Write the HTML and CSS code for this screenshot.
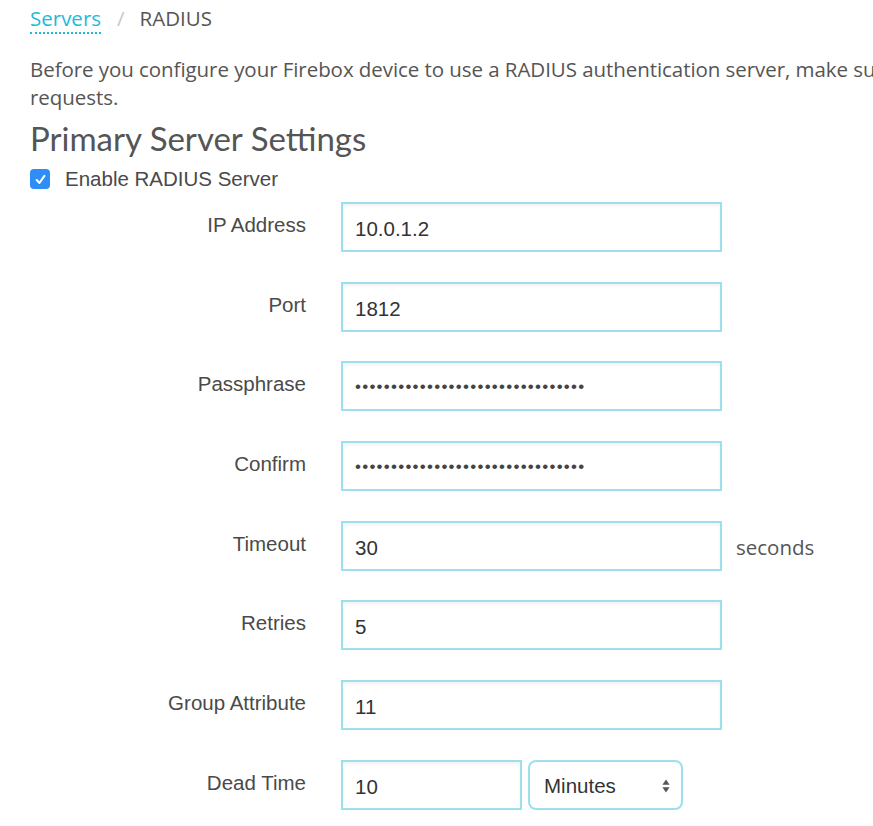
FILE: index.html
```html
<!DOCTYPE html>
<html>
<head>
<meta charset="utf-8">
<link rel="stylesheet" href="styles.css">
</head>
<body>
<div class="page">
  <nav class="crumbs"><a class="crumb-link">Servers</a><span class="sep">/</span><span class="crumb-cur">RADIUS</span></nav>
  <p class="intro">Before you configure your Firebox device to use a RADIUS authentication server, make sure that the server is configured to accept authentication requests.</p>
  <h2 class="title">Primary Server Settings</h2>
  <label class="check"><span class="box"><svg width="13" height="13" viewBox="0 0 12 12"><path d="M2.5 6.5 L5 9.2 L9.6 2.6" fill="none" stroke="#fff" stroke-width="1.9" stroke-linecap="round" stroke-linejoin="round"/></svg></span><span class="check-label">Enable RADIUS Server</span></label>
  <div class="form">
    <div class="row"><div class="lbl">IP Address</div><div class="field"><div class="input">10.0.1.2</div></div></div>
    <div class="row"><div class="lbl">Port</div><div class="field"><div class="input">1812</div></div></div>
    <div class="row"><div class="lbl">Passphrase</div><div class="field"><div class="input dots">••••••••••••••••••••••••••••••••</div></div></div>
    <div class="row"><div class="lbl">Confirm</div><div class="field"><div class="input dots">••••••••••••••••••••••••••••••••</div></div></div>
    <div class="row"><div class="lbl">Timeout</div><div class="field"><div class="input">30</div><span class="unit">seconds</span></div></div>
    <div class="row"><div class="lbl">Retries</div><div class="field"><div class="input">5</div></div></div>
    <div class="row"><div class="lbl">Group Attribute</div><div class="field"><div class="input">11</div></div></div>
    <div class="row"><div class="lbl">Dead Time</div><div class="field"><div class="input short">10</div><div class="select">Minutes<svg class="arrows" width="10" height="18" viewBox="0 0 10 18"><path d="M5 2.5 L8.6 7.8 L1.4 7.8 Z" fill="#555"/><path d="M5 15.5 L8.6 10.2 L1.4 10.2 Z" fill="#555"/></svg></div></div></div>
  </div>
</div>
</body>
</html>
```
FILE: styles.css
```css
html, body { margin: 0; padding: 0; background: #fff; }
body { overflow: hidden; width: 873px; height: 826px; }
.page { padding: 4px 0 0 30px; width: 1500px; }
.crumbs { font-family: "Open Sans", sans-serif; font-size: 20.5px; line-height: 28px; height: 32px; color: #555; display: flex; align-items: flex-start; }
.crumb-link { color: #1bbcd9; border-bottom: 2px dotted #1bbcd9; line-height: 28px; }
.sep { color: #c8c8c8; margin: 0 15px 0 16px; }
.crumb-cur { color: #555; }
.intro { font-family: "Open Sans", sans-serif; font-size: 20.5px; line-height: 28px; color: #555; margin: 19px 0 0 0; width: 1440px; letter-spacing: -0.06px; }
.title { font-family: "Lato", sans-serif; font-weight: 400; font-size: 33px; line-height: 40px; color: #555; margin: 7px 0 0 0; }
.check { display: flex; align-items: center; margin-top: 9px; height: 24px; }
.box { width: 20px; height: 20px; background: #2f8df7; border-radius: 4px; display: flex; align-items: center; justify-content: center; }
.check-label { font-family: "Liberation Sans", Arial, sans-serif; font-size: 20.5px; color: #4a4a4a; margin-left: 15px; }
.form { margin-top: 11px; display: flex; flex-direction: column; gap: 29.7px; }
.row { display: flex; align-items: flex-start; height: 50px; }
.lbl { width: 276px; text-align: right; font-family: "Liberation Sans", Arial, sans-serif; font-size: 20.5px; color: #4a4a4a; padding-top: 11px; }
.field { margin-left: 35px; display: flex; align-items: center; }
.input { box-sizing: border-box; width: 381px; height: 50px; border: 2px solid #9be0ec; box-shadow: inset 0 2px 3px rgba(0,0,0,0.06); padding: 4px 12px 0 12px; font-family: "Liberation Sans", Arial, sans-serif; font-size: 20.5px; color: #333; display: flex; align-items: center; }
.dots { color: #444; font-size: 17px; letter-spacing: 1.25px; padding-top: 2px; }
.input.short { width: 181px; }
.unit { font-family: "Open Sans", sans-serif; font-size: 20.5px; color: #555; margin-left: 14px; padding-top: 2px; }
.select { box-sizing: border-box; width: 155px; height: 50px; margin-left: 6px; border: 2px solid #9be0ec; border-radius: 8px; display: flex; align-items: center; justify-content: space-between; padding: 2px 10px 0 14px; font-family: "Liberation Sans", Arial, sans-serif; font-size: 20.5px; color: #333; }
```
